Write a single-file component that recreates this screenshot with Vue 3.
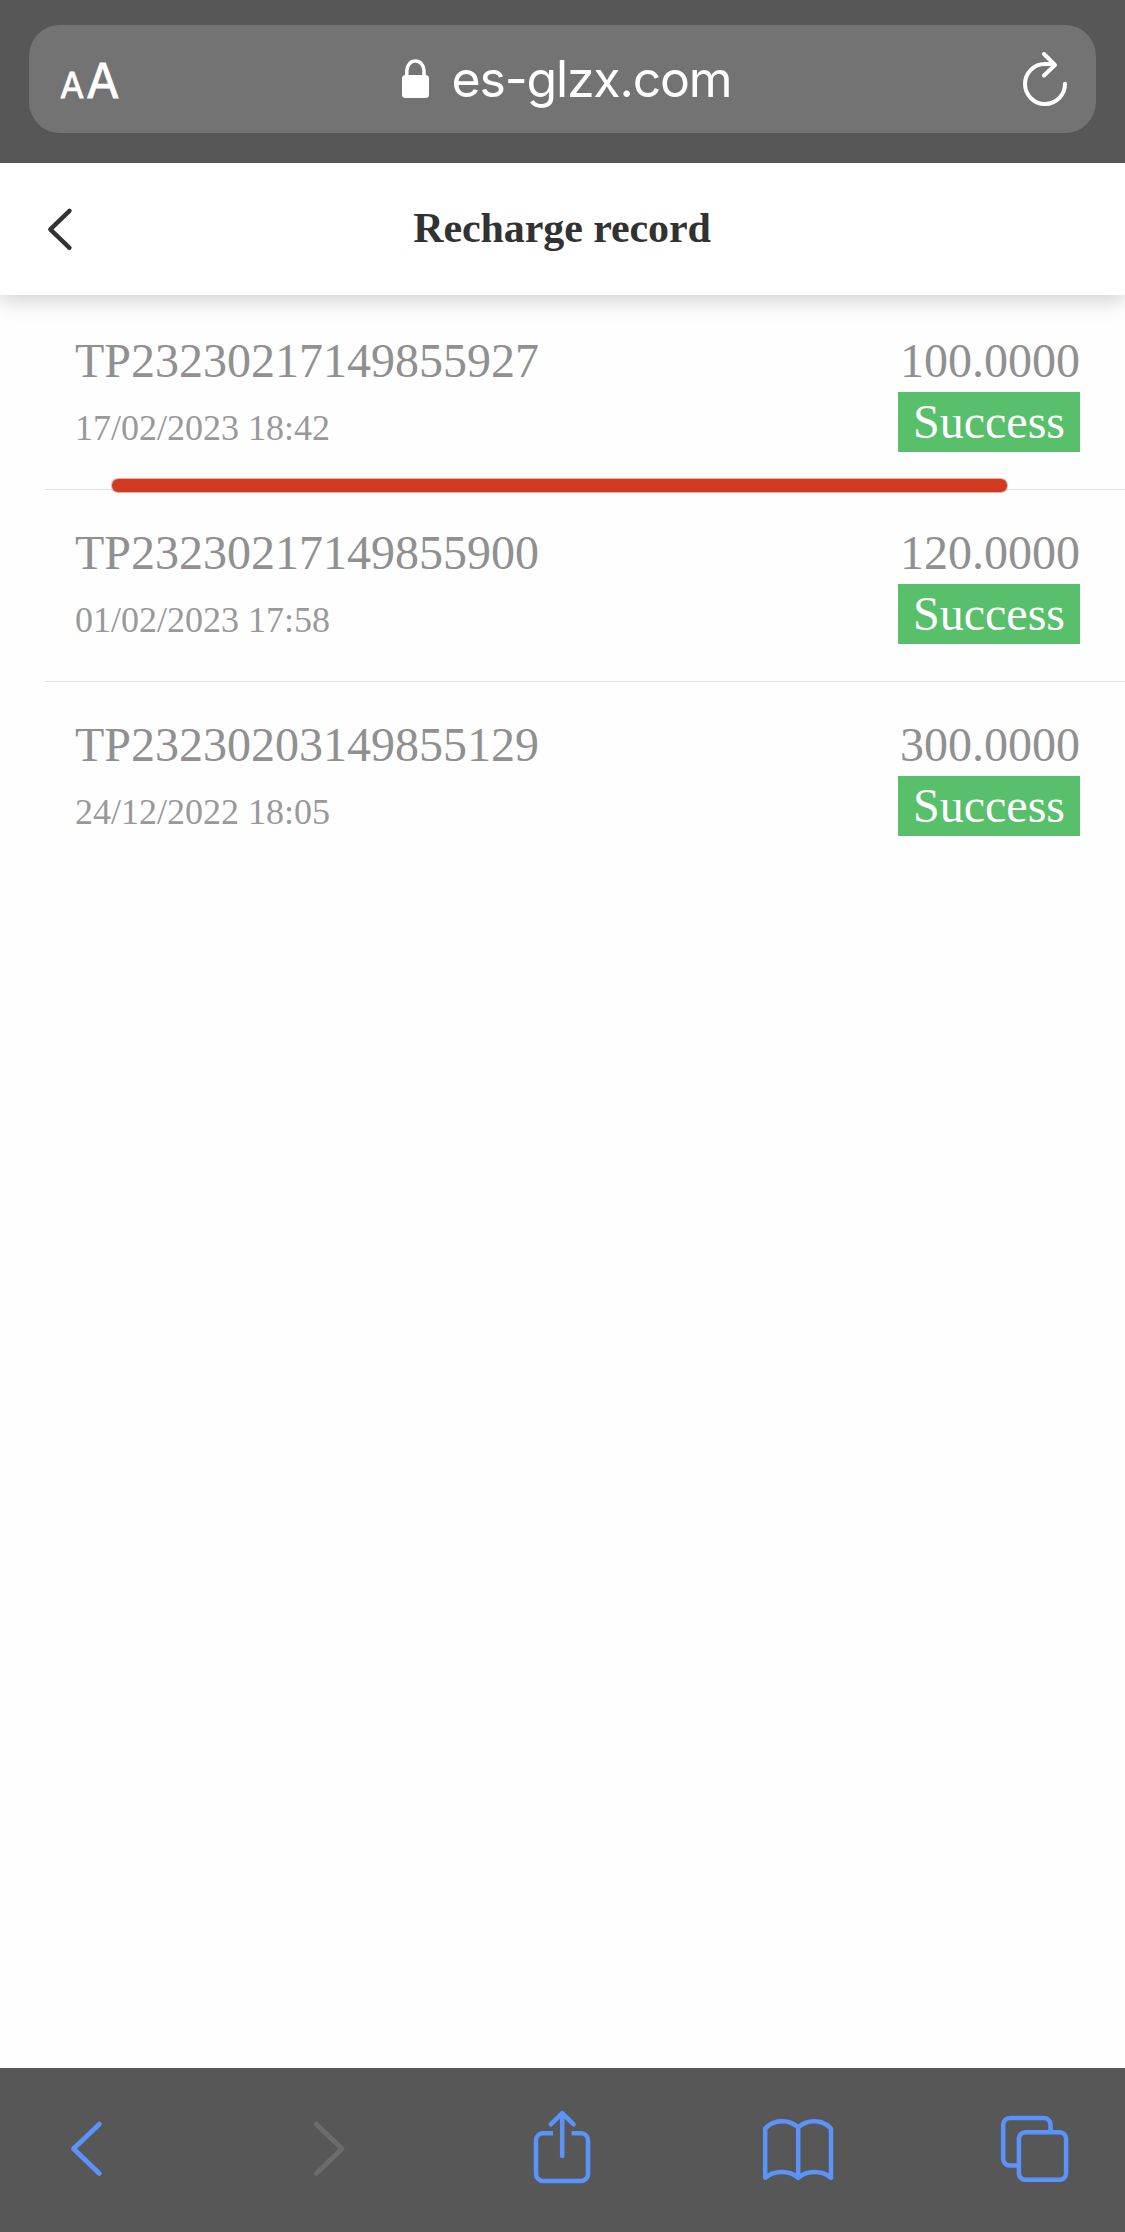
<script setup>
const records = [
  { id: 'TP23230217149855927', date: '17/02/2023 18:42', amount: '100.0000', status: 'Success' },
  { id: 'TP23230217149855900', date: '01/02/2023 17:58', amount: '120.0000', status: 'Success' },
  { id: 'TP23230203149855129', date: '24/12/2022 18:05', amount: '300.0000', status: 'Success' },
]
</script>

<template>
  <div class="screen">
    <div class="browser-bar">
      <div class="address">
        <div class="text-size"><span class="small-a">A</span><span class="large-a">A</span></div>
        <div class="site">
          <svg class="lock" width="28" height="40" viewBox="402 59 28 40">
            <rect x="402" y="75" width="27" height="23" rx="3.5" fill="#fff" />
            <path d="M406.8 77V70.5a8.6 9.4 0 0 1 17.2 0V77" fill="none" stroke="#fff" stroke-width="3.5" />
          </svg>
          <span class="url">es-glzx.com</span>
        </div>
        <svg class="reload" width="48" height="60" viewBox="1021 49 48 60">
          <g fill="none" stroke="#fff" stroke-width="4" stroke-linecap="round" stroke-linejoin="round">
            <path d="M1065 83.8A20 20 0 1 1 1045 64H1053" />
            <path d="M1044 54L1055 65L1044 75.5" />
          </g>
        </svg>
      </div>
    </div>

    <header class="page-header">
      <svg class="back" width="32" height="50" viewBox="44 204 32 50">
        <path d="M69.5 210.8L50.3 229.3L69.5 247.8" fill="none" stroke="#333" stroke-width="4.4" stroke-linecap="round" stroke-linejoin="round" />
      </svg>
      <h1>Recharge record</h1>
    </header>

    <main class="records">
      <article v-for="record in records" :key="record.id" class="record">
        <div class="details">
          <div class="record-id">{{ record.id }}</div>
          <div class="date">{{ record.date }}</div>
        </div>
        <div class="result">
          <div class="amount">{{ record.amount }}</div>
          <div class="status">{{ record.status }}</div>
        </div>
      </article>
      <div class="marker"></div>
    </main>

    <nav class="toolbar">
      <svg class="chevron" width="100" height="100" viewBox="36 2100 100 100">
        <path d="M99.3 2124.2L73.5 2148.8L99.3 2173.4" />
      </svg>
      <svg class="chevron disabled" width="100" height="100" viewBox="273 2100 100 100">
        <path d="M316.3 2124.2L342 2148.8L316.3 2173.4" />
      </svg>
      <svg width="100" height="100" viewBox="510 2100 100 100">
        <path d="M562.2 2156V2114M550.8 2124.4L562.2 2113.2L573.6 2124.4" />
        <path class="butt" d="M553 2133.2H543a7 7 0 0 0-7 7V2174a7 7 0 0 0 7 7H581a7 7 0 0 0 7-7V2140.2a7 7 0 0 0-7-7H571.5" />
      </svg>
      <svg width="100" height="100" viewBox="747 2100 100 100">
        <path d="M798.2 2127.5C789.5 2119 774 2119 765.2 2128.5V2177.8C774 2170 789.5 2170 798.2 2177.8ZM798.2 2127.5C807 2119 822 2119 831 2128.5V2177.8C822 2170 807 2170 798.2 2177.8" />
      </svg>
      <svg width="100" height="100" viewBox="984 2100 100 100">
        <rect x="1018.9" y="2132.2" width="47.200" height="47.600" rx="6.500" />
        <path class="butt" d="M1050.500 2132V2124.600a6.700 6.700 0 0 0-6.700-6.700H1009.900a6.700 6.700 0 0 0-6.700 6.700V2159a6.500 6.500 0 0 0 6.500 6.500H1018" />
      </svg>
    </nav>
  </div>
</template>

<style>
body { background: #fff; }
</style>

<style scoped>
.screen {
  display: flex;
  flex-direction: column;
  width: 1125px;
  height: 2232px;
  overflow: hidden;
  background: #fefefe;
  font-family: "Liberation Serif", serif;
}
.browser-bar {
  position: relative;
  z-index: 1;
  flex: none;
  box-sizing: border-box;
  height: 163px;
  padding: 25px 29px 30px;
  background: #575757;
}
.address {
  display: flex;
  align-items: center;
  justify-content: space-between;
  box-sizing: border-box;
  height: 108px;
  padding: 0 27px 0 31px;
  border-radius: 31px;
  background: #737373;
  color: #fff;
  font-family: Inter, sans-serif;
}
.text-size {
  display: flex;
  align-items: baseline;
  gap: 2px;
  width: 62px;
  padding-top: 7px;
  line-height: 60px;
  -webkit-text-stroke: 0.8px #fff;
}
.small-a { font-size: 35px; }
.large-a {
  font-size: 48px;
}
.site {
  display: flex;
  align-items: center;
  gap: 22px;
  margin-right: 10px;
}
.url {
  font-size: 50px;
  line-height: 60px;
  letter-spacing: -1.2px;
}
.page-header {
  position: relative;
  flex: none;
  display: flex;
  align-items: center;
  box-sizing: border-box;
  height: 132px;
  padding-left: 44px;
  background: #fff;
  box-shadow: 0 6px 20px rgba(0, 0, 0, 0.18);
}
h1 {
  flex: 1;
  margin: 0;
  padding: 0 77px 3px 0;
  color: #323233;
  font-size: 42px;
  line-height: 60px;
  letter-spacing: -0.1px;
  text-align: center;
}
.records {
  position: relative;
  flex: 1;
  padding: 3px 0 0 45px;
}
.record {
  display: flex;
  justify-content: space-between;
  box-sizing: border-box;
  height: 192px;
  padding: 33px 45px 0 30px;
  border-bottom: 1px solid #e3e3e3;
}
.record:nth-child(3) { border-bottom: 0; }
.record-id,
.amount {
  color: #909090;
  font-size: 48px;
  line-height: 60px;
  white-space: nowrap;
}
.date {
  margin-top: 10px;
  color: #999;
  font-size: 36px;
  line-height: 54px;
}
.result { text-align: right; }
.status {
  margin-top: 1px;
  padding: 0 15px;
  background: #58bf6b;
  color: #fff;
  font-size: 48px;
  line-height: 60px;
}
.marker {
  position: absolute;
  top: 183px;
  left: 111px;
  box-sizing: border-box;
  width: 897px;
  height: 15px;
  border: 1px solid rgba(209, 58, 33, 0.4);
  border-radius: 7px;
  background: #d13a21;
  background-clip: padding-box;
}
.toolbar {
  flex: none;
  display: flex;
  justify-content: space-between;
  box-sizing: border-box;
  height: 164px;
  padding: 32px 41px 32px 36px;
  background: #575757;
}
.toolbar svg {
  fill: none;
  stroke: #5c93fa;
  stroke-width: 4.5;
  stroke-linecap: round;
  stroke-linejoin: round;
}
.toolbar .chevron { stroke-width: 4.9; }
.toolbar .disabled { stroke: #6c6c6c; }
.toolbar .butt { stroke-linecap: butt; }
</style>
